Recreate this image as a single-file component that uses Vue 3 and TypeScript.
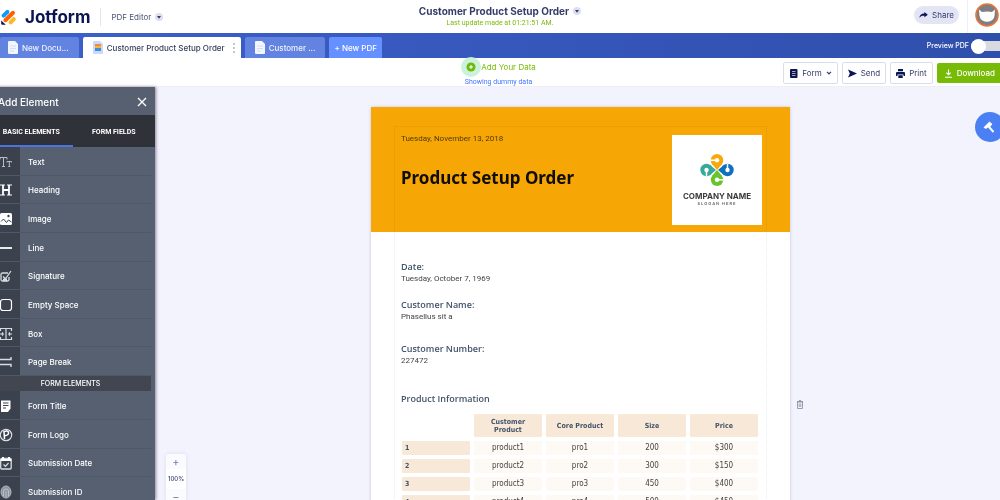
<script setup lang="ts">
import { ref } from 'vue'

interface ElementItem {
  label: string
  icon: string
}

const basicElements: ElementItem[] = [
  { label: 'Text', icon: 'text' },
  { label: 'Heading', icon: 'heading' },
  { label: 'Image', icon: 'image' },
  { label: 'Line', icon: 'line' },
  { label: 'Signature', icon: 'signature' },
  { label: 'Empty Space', icon: 'space' },
  { label: 'Box', icon: 'box' },
  { label: 'Page Break', icon: 'break' },
]

const formElements: ElementItem[] = [
  { label: 'Form Title', icon: 'title' },
  { label: 'Form Logo', icon: 'logo' },
  { label: 'Submission Date', icon: 'date' },
  { label: 'Submission ID', icon: 'id' },
]

const groups = [
  { name: 'basic', heading: '', items: basicElements },
  { name: 'form', heading: 'FORM ELEMENTS', items: formElements },
]

const fields = [
  { label: 'Date:', value: 'Tuesday, October 7, 1969' },
  { label: 'Customer Name:', value: 'Phasellus sit a' },
  { label: 'Customer Number:', value: '227472' },
]

const columns = ['Customer Product', 'Core Product', 'Size', 'Price']
const products = [
  ['product1', 'pro1', '200', '$300'],
  ['product2', 'pro2', '300', '$150'],
  ['product3', 'pro3', '450', '$400'],
  ['product4', 'pro4', '500', '$450'],
]

const preview = ref(false)
const zoomLevel = ref(100)
</script>

<template>
  <div class="app">
    <header class="top">
      <div class="brand">
        <svg class="mark" viewBox="0 0 18 18" aria-hidden="true">
          <g fill="none" stroke-width="4" stroke-linecap="round">
            <path d="M3.6 7.6 7.4 3.8" stroke="#0a9bff" />
            <path d="M5.4 12.2 13 4.8" stroke="#ff6100" />
            <path d="M10.6 14.4 13.8 11.2" stroke="#ffb629" />
          </g>
          <path d="M1.2 12.4v3.2q0 1.2 1.2 1.2h3.4z" fill="#0a1551" />
        </svg>
        <span class="wordmark">Jotform</span>
        <button class="product" type="button">
          PDF Editor
          <svg class="round-chev" viewBox="0 0 8 8" aria-hidden="true"><circle cx="4" cy="4" r="4" fill="#dcdff2" /><path d="M2 3h4L4 5.8z" fill="#343c6a" /></svg>
        </button>
      </div>
      <div class="doc">
        <button class="doc-title" type="button">
          Customer Product Setup Order
          <svg class="round-chev" viewBox="0 0 8 8" aria-hidden="true"><circle cx="4" cy="4" r="4" fill="#dcdff2" /><path d="M2 3h4L4 5.8z" fill="#343c6a" /></svg>
        </button>
        <span class="saved">Last update made at 01:21:51 AM.</span>
      </div>
      <div class="account">
        <button class="share" type="button">
          <svg viewBox="0 0 10 8" aria-hidden="true"><path d="M6 0.6 9.8 3.6 6 6.6V4.9C3.400 4.700 1.600 5.300 0.400 7.400 0.500 4.200 2.600 2.400 6 2.300z" fill="#0a1551" /></svg>
          Share
        </button>
        <button class="avatar" type="button" aria-label="Account">
          <svg viewBox="0 0 24 24" aria-hidden="true">
            <circle cx="12" cy="12" r="11" fill="#7d7f83" stroke="#e8743b" stroke-width="1.600" />
            <path d="M4 6.500 7 9q5-1.200 10 0l3-2.500-.5 6.500q-.5 3-3 4.500-4.500 2.500-9 0-2.500-1.500-3-4.500z" fill="#fff" />
          </svg>
        </button>
      </div>
    </header>

    <nav class="tabs">
      <a class="tab first" href="#new">
        <svg class="file" viewBox="0 0 10 13" aria-hidden="true"><path d="M1 0h6l3 3v9q0 1-1 1H1q-1 0-1-1V1q0-1 1-1z" fill="#f4f6ff" /><path d="M2 5h6M2 7.500h6M2 10h4" stroke="#d3ddfa" /></svg>
        New Docu...
      </a>
      <a class="tab active" href="#order">
        <svg class="file" viewBox="0 0 10 13" aria-hidden="true"><path d="M1 0h6l3 3v9q0 1-1 1H1q-1 0-1-1V1q0-1 1-1z" fill="#c8d9fb" /><path d="M2 3h6v2H2z" fill="#ee8a4a" /><path d="M2 5h6v2H2z" fill="#f5b43c" /><path d="M2 7h6v3H2z" fill="#3f8fd6" /></svg>
        Customer Product Setup Order
        <svg class="dots" viewBox="0 0 2 10" aria-hidden="true"><circle cx="1" cy="1" r="1" /><circle cx="1" cy="5" r="1" /><circle cx="1" cy="9" r="1" /></svg>
      </a>
      <a class="tab" href="#customer">
        <svg class="file" viewBox="0 0 10 13" aria-hidden="true"><path d="M1 0h6l3 3v9q0 1-1 1H1q-1 0-1-1V1q0-1 1-1z" fill="#f4f6ff" /><path d="M2 5h6M2 7.500h6M2 10h4" stroke="#d3ddfa" /></svg>
        Customer ...
      </a>
      <button class="new-pdf" type="button">+ New PDF</button>
      <label class="preview">
        Preview PDF
        <input v-model="preview" type="checkbox" />
      </label>
    </nav>

    <div class="toolbar">
      <span></span>
      <div class="data">
        <button class="add-data" type="button">
          <svg viewBox="0 0 20 20" aria-hidden="true"><circle cx="10" cy="10" r="10" fill="#cdf2db" /><circle cx="10" cy="10" r="4.500" fill="#6fb80d" /><path d="M10 8v4M8 10h4" stroke="#fff" /></svg>
          Add Your Data
        </button>
        <a class="dummy" href="#dummy">Showing dummy data</a>
      </div>
      <div class="actions">
        <button class="action" type="button">
          <svg class="icon" viewBox="0 0 9 9" aria-hidden="true"><rect x="1" width="7.500" height="9" rx="1" fill="#0a1551" /><path d="M3 2.500h3.500M3 4.500h3.500M3 6.500h3.500" stroke="#c5c8dc" stroke-width=".8" /></svg>
          Form
          <svg class="caret" viewBox="0 0 6 4" aria-hidden="true"><path d="M1 .8 3 2.800 5 .8" fill="none" stroke="#343c6a" stroke-width="1.200" /></svg>
        </button>
        <button class="action" type="button">
          <svg class="icon" viewBox="0 0 9 9" aria-hidden="true"><path d="M0 .5 9 4.500 0 8.500 1.800 4.500z" fill="#0a1551" /></svg>
          Send
        </button>
        <button class="action" type="button">
          <svg class="icon" viewBox="0 0 9 9" aria-hidden="true"><path d="M2 0h5v2.200H2zM1 3h7q1 0 1 1v3H7.500V5.500h-6V7H0V4q0-1 1-1zM2.300 6.200h4.400V9H2.300z" fill="#0a1551" /></svg>
          Print
        </button>
        <button class="action download" type="button">
          <svg class="icon" viewBox="0 0 9 9" aria-hidden="true"><path d="M4.500.5v5M2.300 3.600l2.200 2.200 2.200-2.200M1 8.300h7" fill="none" stroke="#fff" stroke-width="1.100" /></svg>
          Download
        </button>
      </div>
    </div>

    <div class="work">
      <aside class="panel">
        <div class="panel-head">
          <h2>Add Element</h2>
          <button type="button" aria-label="Close panel">
            <svg viewBox="0 0 10 10" aria-hidden="true"><path d="M1 1l8 8M9 1 1 9" stroke="#fff" stroke-width="1.300" /></svg>
          </button>
        </div>
        <div class="panel-tabs">
          <button class="on" type="button">BASIC ELEMENTS</button>
          <button type="button">FORM FIELDS</button>
        </div>
        <section v-for="group in groups" :key="group.name">
          <h3 v-if="group.heading">{{ group.heading }}</h3>
          <ul :class="group.name">
            <li v-for="item in group.items" :key="item.label">
              <span class="cell">
                <svg viewBox="0 0 14 14" fill="none" stroke="#d9dde3" aria-hidden="true">
                  <path v-if="item.icon === 'text'" d="M0 4.500V2.500h7v2M3.500 2.500v9M2 11.500h3M7 7.500v-1h4.500v1M9.300 6.500v5M8.300 11.500h2" stroke="#b9bec6" />
                  <g v-else-if="item.icon === 'heading'" stroke="#fff">
                    <path d="M3 2v10M9 2v10M3 7h6" stroke-width="1.800" /><path d="M0 2h5M7 2h5M0 12h5M7 12h5" />
                  </g>
                  <g v-else-if="item.icon === 'image'">
                    <rect y="1" width="12" height="12" rx="1.500" fill="#fff" stroke="none" />
                    <path d="M1 9.500 3.500 7l3 3.500L8.500 8l3 2" stroke="#3b424d" /><circle cx="8.500" cy="4" r="1.200" fill="#3b424d" stroke="none" />
                  </g>
                  <path v-else-if="item.icon === 'line'" d="M0 7h12" stroke="#fff" stroke-width="1.800" />
                  <path v-else-if="item.icon === 'signature'" d="M8 4H2.500Q1 4 1 5.500v5Q1 12 2.500 12h5Q9 12 9 10.500V8M3 7.500l2.500 2.300L11 2M3 10.500h4" stroke-width="1.300" />
                  <rect v-else-if="item.icon === 'space'" x=".5" y="1.500" width="11" height="11" rx="2.500" stroke="#fff" stroke-width="1.200" />
                  <path v-else-if="item.icon === 'box'" d="M.5 4V1.500h11V4M.5 10v2.500h11V10M6 1.500v11M0 7h4M12 7H8M2.500 5.200v3.600M9.500 5.200v3.600" stroke-width="1.200" />
                  <path v-else-if="item.icon === 'break'" d="M0 4.500h11V2M0 9.500h11V12" stroke-width="1.400" />
                  <g v-else-if="item.icon === 'title'" stroke="none">
                    <path d="M1 1.500h9.500v8L8 13H1z" fill="#fff" /><path d="M3 4h5.500M3 6.500h5.500M3 9h3" stroke="#3b424d" />
                  </g>
                  <g v-else-if="item.icon === 'logo'">
                    <circle cx="6" cy="7" r="5.700" stroke-width="1.200" /><path d="M4.500 11 4 3.500q4-1.500 4.500 1T5 7.800" stroke="#fff" stroke-width="1.500" />
                  </g>
                  <g v-else-if="item.icon === 'date'">
                    <rect x=".7" y="2.500" width="10.500" height="10.500" rx="1" stroke-width="1.300" /><path d="M.7 4h10.500M3 1v2M9 1v2" stroke="#fff" stroke-width="2" /><path d="m3.500 8.500 2 1.800 3-3.300" stroke-width="1.200" />
                  </g>
                  <g v-else>
                    <ellipse cx="6" cy="7" rx="5" ry="6" fill="#8e959f" stroke="#b4bac2" />
                    <path d="M3.500 11V6q0-2 2.500-2t2.500 2v5M6 6v6" stroke="#c8ccd2" stroke-width=".8" />
                  </g>
                </svg>
              </span>
              <button type="button">{{ item.label }}</button>
            </li>
          </ul>
        </section>
      </aside>

      <main class="canvas">
        <article class="sheet">
          <div class="guide"></div>
          <header class="cover">
            <div>
              <p class="issued">Tuesday, November 13, 2018</p>
              <h1>Product Setup Order</h1>
            </div>
            <div class="company">
              <svg viewBox="0 0 34 32" aria-hidden="true">
                <path d="M12 10h10l-5 6z" fill="#f9a80a" />
                <path d="M10 11v10l6-5z" fill="#36a99b" />
                <path d="M24 11v10l-6-5z" fill="#0f6fc0" />
                <path d="M12 22h10l-5-6z" fill="#69c42c" />
                <circle cx="17" cy="6.200" r="6.200" fill="#f9a80a" />
                <circle cx="6.500" cy="16" r="6.200" fill="#36a99b" />
                <circle cx="27.500" cy="16" r="6.200" fill="#0f6fc0" />
                <circle cx="17" cy="25.800" r="6.200" fill="#69c42c" />
                <g fill="#fff">
                  <circle cx="17" cy="6.200" r="2.200" />
                  <circle cx="6.500" cy="16" r="2.200" />
                  <circle cx="27.500" cy="16" r="2.200" />
                  <circle cx="17" cy="25.800" r="2.200" />
                </g>
                <path d="M11 6.200h6M6.500 16v6M27.500 16v-6M17 25.800h6" stroke="#fff" stroke-width="1.500" />
              </svg>
              <strong>COMPANY NAME</strong>
              <small>SLOGAN HERE</small>
            </div>
          </header>
          <dl class="fields">
            <div v-for="field in fields" :key="field.label">
              <dt>{{ field.label }}</dt>
              <dd>{{ field.value }}</dd>
            </div>
          </dl>
          <h2 id="products">Product Information</h2>
          <table aria-labelledby="products">
            <thead>
              <tr>
                <td></td>
                <th v-for="column in columns" :key="column" scope="col">{{ column }}</th>
              </tr>
            </thead>
            <tbody>
              <tr v-for="(row, index) in products" :key="index">
                <th scope="row">{{ index + 1 }}</th>
                <td v-for="value in row" :key="value">{{ value }}</td>
              </tr>
            </tbody>
          </table>
        </article>
        <button class="remove" type="button" aria-label="Delete page">
          <svg viewBox="0 0 6 9" aria-hidden="true"><path d="M.5 2h5v6.500h-5zM0 1.500h6M2 .5h2M2.200 3.500v3.500M3.800 3.500v3.500" fill="none" stroke="#85889a" stroke-width=".8" /></svg>
        </button>
        <div class="zoom">
          <button type="button" aria-label="Zoom in" @click="zoomLevel += 10">+</button>
          <output>{{ zoomLevel }}%</output>
          <button type="button" aria-label="Zoom out" @click="zoomLevel -= 10">−</button>
        </div>
        <button class="design" type="button" aria-label="Page design">
          <svg viewBox="0 0 14 14" aria-hidden="true"><path d="M1.500 7.500 7.500 1.500l2.500 2.500L4 9z" fill="#fff" /><path d="M9.500 3.500 7 7l4.500 5" fill="none" stroke="#fff" stroke-width="2" /></svg>
        </button>
      </main>
    </div>
  </div>
</template>

<style>
body {
  margin: 0;
}
</style>

<style scoped>
.app {
  display: flex;
  flex-direction: column;
  height: 100vh;
  overflow: hidden;
  background: #fff;
  color: #343c6a;
  font-family: Inter, "Liberation Sans", sans-serif;
  font-size: 8px;
  line-height: 12px;
}
.app *,
.app *::before {
  box-sizing: border-box;
}
button {
  padding: 0;
  border: 0;
  background: none;
  color: inherit;
  font: inherit;
  cursor: pointer;
}
a {
  color: inherit;
  text-decoration: none;
}
svg {
  display: block;
  flex: none;
}
h1, h2, h3, p, ul, dl, dd {
  margin: 0;
  padding: 0;
}

.top {
  flex: none;
  display: grid;
  grid-template-columns: 1fr auto 1fr;
  height: 33px;
}
.brand {
  display: flex;
  align-items: center;
}
.mark {
  width: 18px;
  height: 18px;
}
.wordmark {
  margin-left: 7px;
  color: #0a1551;
  font-size: 17px;
  font-weight: 700;
  line-height: 20px;
}
.product {
  display: flex;
  align-items: center;
  gap: 4px;
  height: 18px;
  margin-left: 10px;
  padding-left: 10px;
  border-left: 1px solid #e3e5f0;
  color: #4b5278;
}
.round-chev {
  width: 8px;
  height: 8px;
}
.doc {
  display: flex;
  flex-direction: column;
  align-items: center;
  padding-top: 5px;
}
.doc-title {
  display: flex;
  align-items: center;
  gap: 4px;
  font-size: 10px;
  font-weight: 700;
}
.saved {
  color: #78bb07;
  font-family: Roboto, sans-serif;
  font-size: 7px;
}
.account {
  display: flex;
  align-items: center;
  justify-content: flex-end;
}
.share {
  display: flex;
  align-items: center;
  gap: 4px;
  height: 18px;
  margin: 0 8px 3px 0;
  padding: 0 5px;
  border-radius: 9px;
  background: #e3e5f5;
}
.share svg {
  width: 9px;
  height: 8px;
}
.avatar {
  height: 33px;
  padding: 0 1px 4px 7px;
  border-left: 1px solid #eff0f6;
}
.avatar svg {
  width: 24px;
  height: 24px;
}

.tabs {
  flex: none;
  display: flex;
  align-items: flex-end;
  gap: 4px;
  height: 25px;
  background: linear-gradient(90deg, #3d60cb, #2f4fac);
}
.tab,
.new-pdf {
  display: flex;
  align-items: center;
  height: 21px;
  border-radius: 2px 2px 0 0;
  background: #6283e0;
  color: #eef2ff;
  font-weight: 500;
}
.tab {
  gap: 4px;
  padding: 0 10px;
}
.tab.first {
  padding: 0 10px 0 8px;
}
.tab.active {
  padding: 0 6px 0 10px;
  background: #fff;
  color: #343c5a;
}
.file {
  width: 10px;
  height: 13px;
}
.dots {
  width: 2px;
  height: 10px;
  margin-left: 4px;
  fill: #aeb2c4;
}
.new-pdf {
  padding: 0 5px;
  background: #6590ff;
  color: #fff;
}
.preview {
  display: flex;
  align-items: center;
  gap: 2px;
  height: 24px;
  margin-left: auto;
  color: #fff;
  font-size: 7px;
  font-weight: 500;
}
.preview input {
  display: flex;
  align-items: center;
  width: 29px;
  height: 10px;
  margin: 0;
  border-radius: 5px 0 0 5px;
  background: #d9dae0;
  appearance: none;
}
.preview input::before {
  content: "";
  width: 15px;
  height: 15px;
  flex: none;
  border-radius: 50%;
  background: #fff;
}
.preview input:checked::before {
  margin-left: auto;
}

.toolbar {
  flex: none;
  display: grid;
  grid-template-columns: 1fr auto 1fr;
  height: 28px;
}
.data {
  display: flex;
  flex-direction: column;
  align-items: center;
  padding-right: 3px;
}
.add-data {
  display: flex;
  align-items: center;
  height: 18px;
  color: #78bb07;
}
.add-data svg {
  width: 20px;
  height: 20px;
}
.dummy {
  color: #4277ff;
  font-family: Roboto, sans-serif;
  font-size: 7px;
}
.actions {
  display: flex;
  align-items: center;
  justify-content: flex-end;
  gap: 4px;
}
.action {
  display: flex;
  align-items: center;
  gap: 4px;
  height: 22px;
  padding: 0 5px;
  border: 1px solid #dcdde9;
  border-radius: 2px;
  background: #fff;
}
.icon {
  width: 9px;
  height: 9px;
}
.caret {
  width: 6px;
  height: 4px;
}
.action.download {
  height: 20px;
  padding: 0 5px 0 7px;
  border: 0;
  border-radius: 2px 0 0 2px;
  background: #78bb07;
  color: #fff;
  font-weight: 500;
}

.work {
  flex: 1;
  display: flex;
  min-height: 0;
  border-top: 1px solid #eeeef6;
  background: #f3f3fe;
}
.panel {
  flex: none;
  width: 165px;
  margin-left: -10px;
  overflow: hidden;
  background: #576070;
  color: #fff;
  box-shadow: 1px 0 3px #8c8494;
}
.panel-head {
  display: flex;
  align-items: center;
  justify-content: space-between;
  height: 28px;
  padding: 1px 8px 0;
}
.panel-head h2 {
  font-size: 10px;
  font-weight: 500;
}
.panel-head svg {
  width: 10px;
  height: 10px;
}
.panel-tabs {
  display: grid;
  grid-template-columns: 1fr 1fr;
  height: 32px;
  background: #303239;
}
.panel-tabs button {
  padding-top: 4px;
  border-bottom: 2px solid #303239;
  font-family: Roboto, sans-serif;
  font-size: 7px;
  font-weight: 700;
}
.panel-tabs .on {
  border-color: #4a74e0;
}
ul {
  display: grid;
  grid-auto-rows: 1fr;
  background: linear-gradient(90deg, #3b424d 30px, #576070 30px);
  list-style: none;
}
.basic {
  height: 229px;
}
.form {
  height: 115px;
}
li {
  display: grid;
  grid-template-columns: 30px 1fr;
  align-items: center;
  margin-right: 4px;
  padding-top: 2px;
  border-bottom: 1px solid #4f5867;
}
li svg {
  width: 14px;
  height: 14px;
  margin-left: 10px;
}
li button {
  padding-left: 8px;
  font-weight: 500;
  text-align: left;
}
h3 {
  height: 15px;
  margin-right: 4px;
  background: #414651;
  font-size: 7px;
  font-weight: 500;
  line-height: 15px;
  text-align: center;
}

.canvas {
  position: relative;
  flex: 1;
  display: flex;
  align-items: flex-start;
  justify-content: center;
  overflow: hidden;
  padding: 20px 0 0 19px;
}
.sheet {
  position: relative;
  flex: none;
  width: 419px;
  min-height: 480px;
  background: #fff;
  box-shadow: 0 0 3px #c4c4d4;
  color: #444;
  font-family: "DejaVu Sans Condensed", "DejaVu Sans", sans-serif;
}
.guide {
  position: absolute;
  inset: 19px 23px 0;
  border: 1px dotted #e2edf4;
  border-bottom: 0;
  mix-blend-mode: multiply;
}
.cover {
  display: flex;
  justify-content: space-between;
  height: 125px;
  padding: 26px 28px 0 30px;
  background: #f7a705;
}
.issued,
dd {
  font-family: Roboto, sans-serif;
}
.issued {
  color: #4f3a0c;
}
h1 {
  margin-top: 23px;
  color: #0f0d05;
  font-family: "Noto Sans", sans-serif;
  font-size: 17px;
  line-height: 20px;
}
.company {
  display: flex;
  flex-direction: column;
  align-items: center;
  width: 90px;
  height: 90px;
  margin-top: 2px;
  padding-top: 19px;
  background: #fff;
  color: #3a3a3a;
  font-family: Inter, sans-serif;
}
.company svg {
  width: 34px;
  height: 32px;
}
.company strong {
  margin-top: 5px;
  font-size: 8px;
  line-height: 10px;
}
.company small {
  color: #666;
  font-size: 4px;
  font-weight: 600;
  letter-spacing: 1px;
  line-height: 6px;
}
.fields {
  display: grid;
  row-gap: 13px;
  padding: 28px 30px 0;
}
.fields div:last-child {
  margin-top: 6px;
}
dt,
.sheet h2 {
  color: #42526b;
  font-family: "Open Sans", sans-serif;
  font-size: 9px;
  font-weight: 600;
  line-height: 13px;
}
.sheet h2 {
  margin: 25px 30px 0;
}
table {
  width: 364px;
  margin: 5px 27px 0;
  border-spacing: 4px;
  table-layout: fixed;
}
td,
th {
  height: 14px;
  padding: 0;
  border-radius: 1px;
  background: #fdf9f4;
  text-align: center;
}
td {
  line-height: 14px;
}
th {
  background: #f7e8d7;
  color: #42526b;
  font-size: 7px;
  line-height: 8px;
}
thead th {
  height: 23px;
  padding: 0 10px;
}
thead td {
  background: none;
}
tbody th {
  padding-left: 3px;
  text-align: left;
}
.remove {
  margin: 293px 0 0 7px;
}
.remove svg {
  width: 6px;
  height: 9px;
}
.zoom {
  position: absolute;
  top: 367px;
  left: 11px;
  display: flex;
  flex-direction: column;
  width: 20px;
  border-radius: 3px;
  background: #fafaff;
  box-shadow: 0 0 4px #dcdcec;
  text-align: center;
}
.zoom button {
  height: 15px;
  color: #7a7ca4;
  font-size: 11px;
}
.zoom output {
  background: #fff;
  font-size: 6px;
  font-weight: 500;
  line-height: 20px;
}
.design {
  position: absolute;
  top: 25px;
  right: -5px;
  width: 30px;
  height: 30px;
  padding-left: 7px;
  border-radius: 50%;
  background: #4b80f5;
}
.design svg {
  width: 14px;
  height: 14px;
}
</style>
